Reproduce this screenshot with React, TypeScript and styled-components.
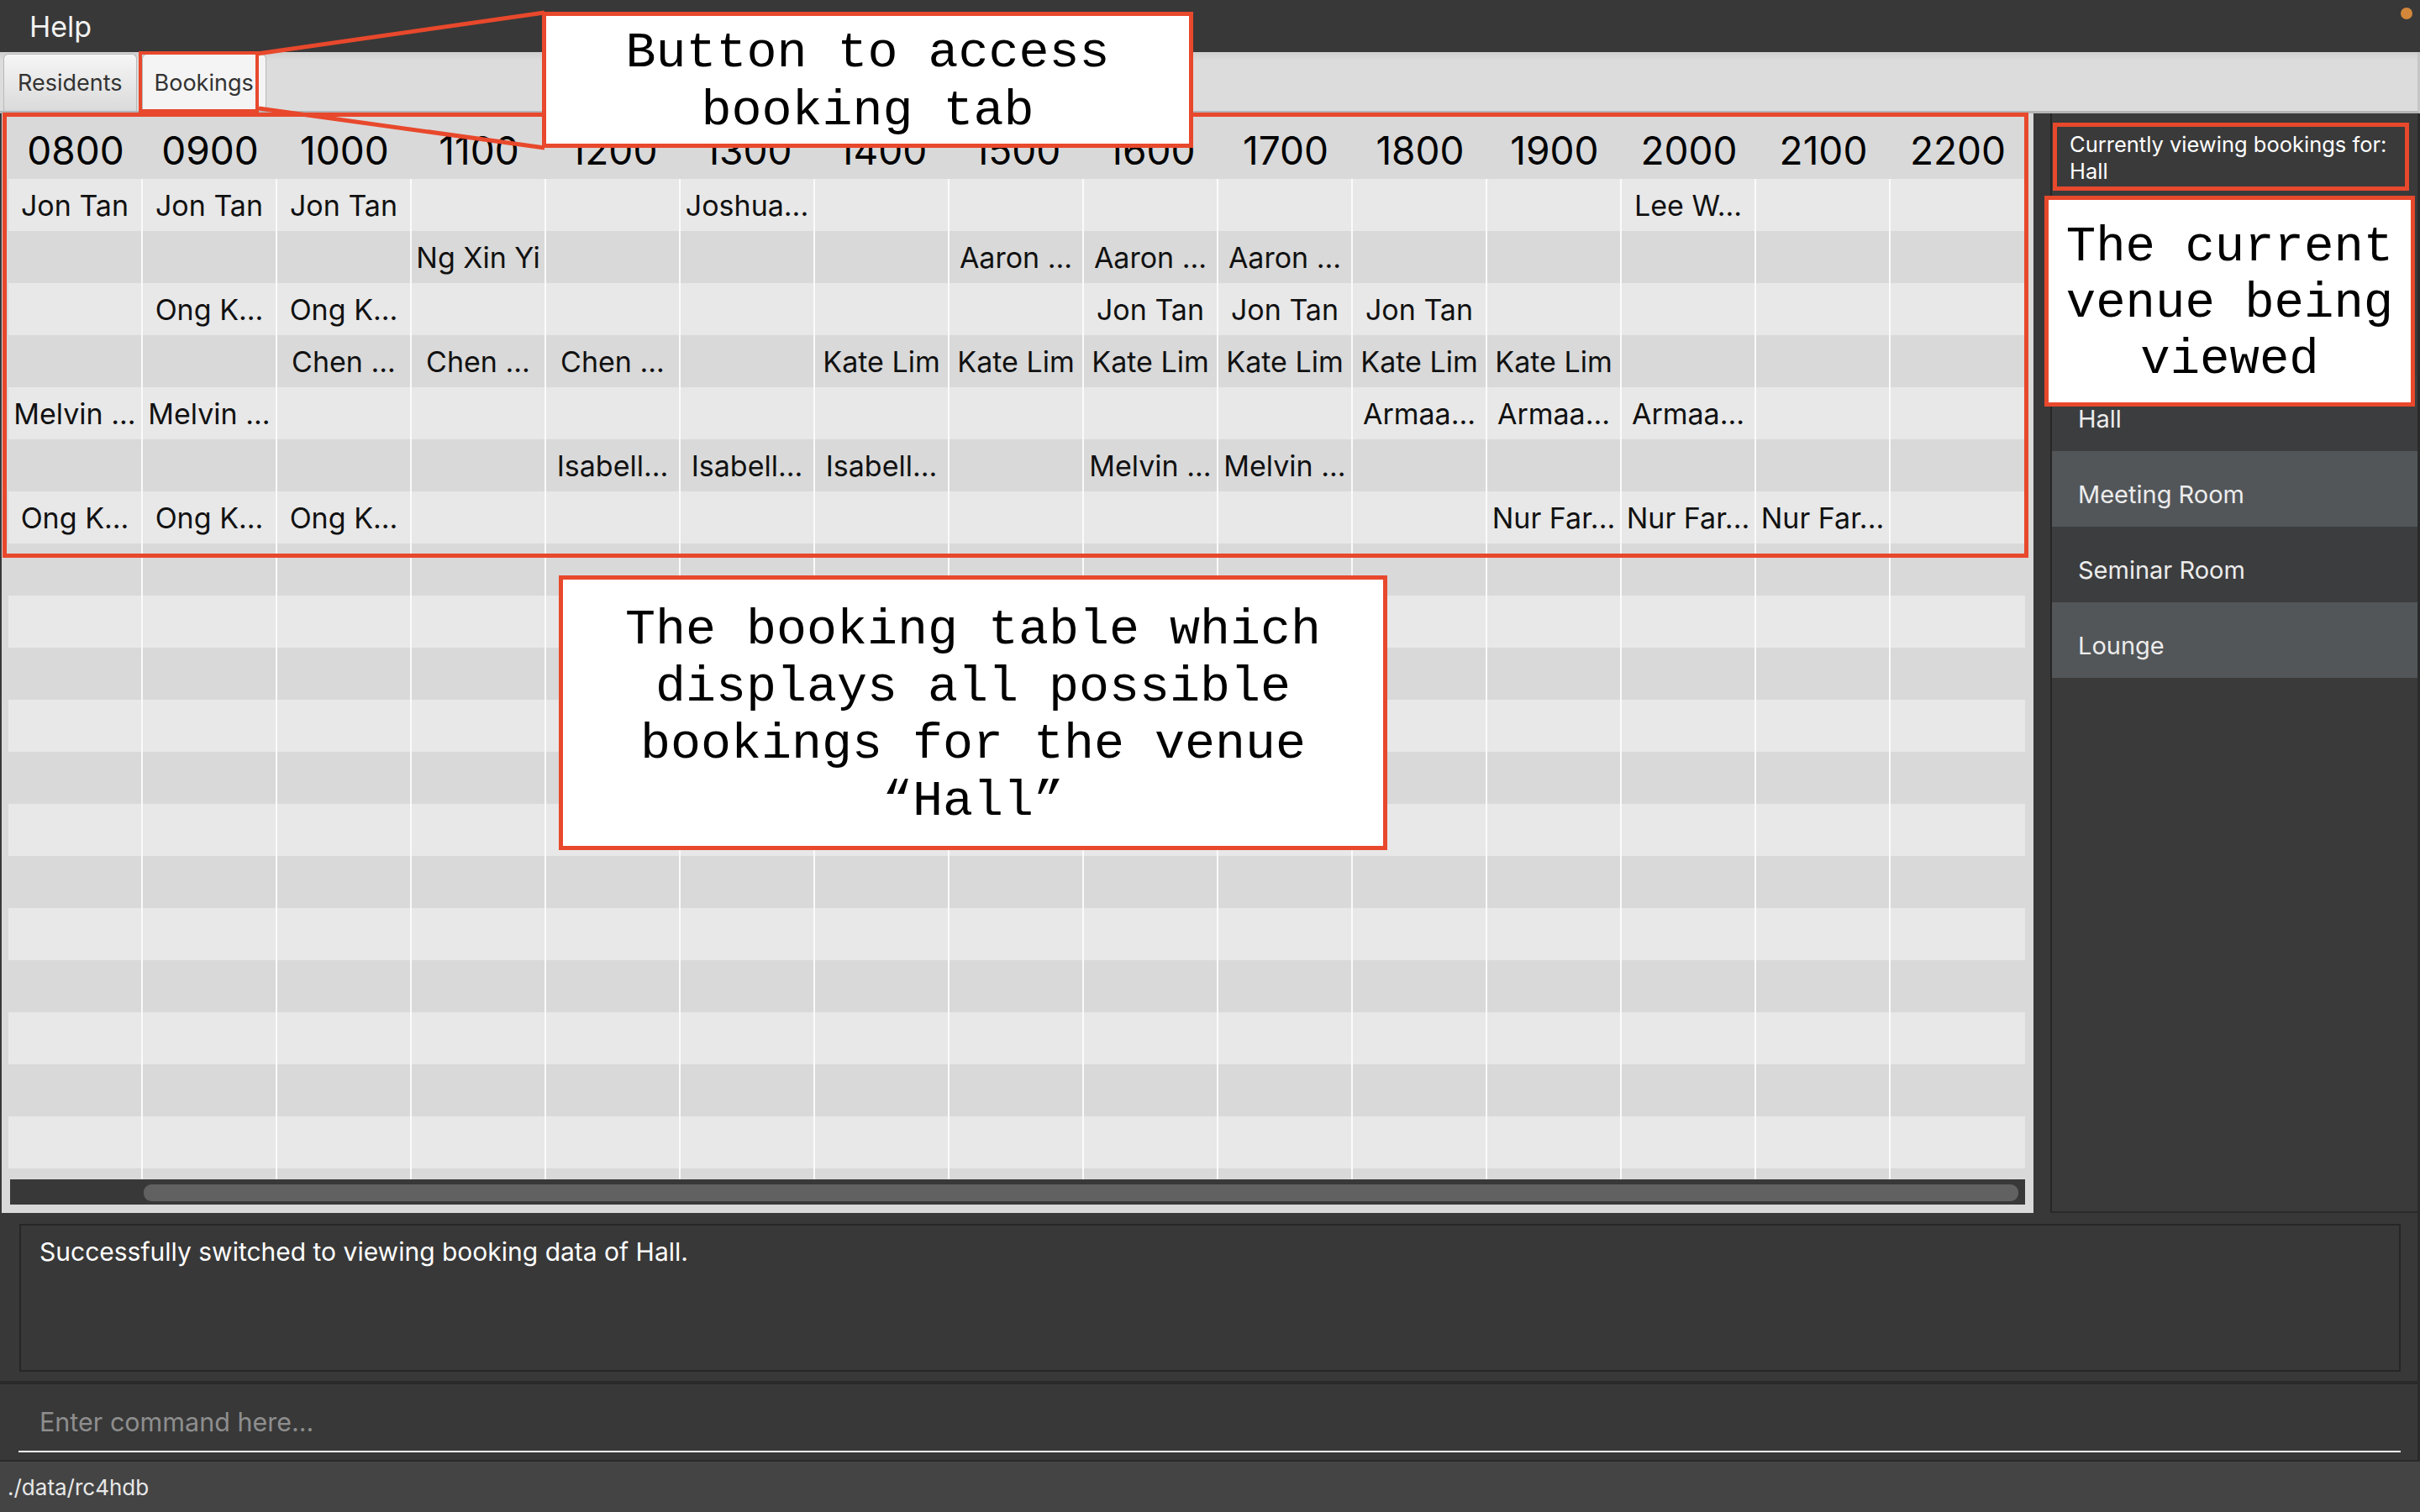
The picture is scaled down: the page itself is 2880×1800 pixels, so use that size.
import React from 'react';
import styled, { createGlobalStyle } from 'styled-components';

const RED = '#e8482c';

const GlobalStyle = createGlobalStyle`
  html, body {
    margin: 0;
    padding: 0;
    background: #383838;
  }
  body {
    font-family: Inter, "Noto Sans", sans-serif;
  }
  * {
    box-sizing: border-box;
  }
`;

const Window = styled.div`
  position: relative;
  width: 2880px;
  height: 1800px;
  display: flex;
  flex-direction: column;
  background: #383838;
  overflow: hidden;
`;

const MenuBar = styled.div`
  height: 62px;
  flex: none;
  display: flex;
  align-items: center;
  padding-left: 35px;
  color: #f2f2f2;
  font-size: 34px;
`;

const MenuDot = styled.span`
  margin-left: auto;
  align-self: flex-start;
  margin-top: 9px;
  margin-right: 9px;
  width: 14px;
  height: 14px;
  border-radius: 50%;
  background: #d3873a;
`;

const TabBar = styled.div`
  height: 73px;
  flex: none;
  display: flex;
  align-items: flex-end;
  gap: 6px;
  padding-left: 4px;
  background: linear-gradient(#cfcfcf, #dcdcdc 10px);
  border-bottom: 3px solid #b4b4b4;
  border-right: 3px solid #c6c6c6;
`;

const Tab = styled.div<{ $active?: boolean }>`
  height: 68px;
  display: flex;
  align-items: center;
  padding: 0 ${p => (p.$active ? 14 : 16)}px;
  font-size: 27px;
  color: #333;
  border: 1px solid #b8b8b8;
  border-bottom: none;
  border-radius: 6px 6px 0 0;
  background: ${p => (p.$active ? '#f4f4f4' : 'linear-gradient(#f6f6f6, #dadada)')};
`;

const Main = styled.div`
  height: 1309px;
  flex: none;
  display: flex;
`;

const TablePanel = styled.div`
  width: 2420px;
  flex: none;
  display: flex;
  flex-direction: column;
  background: #d9d9d9;
  border-left: 2px solid #383838;
  padding: 2px 10px 10px 8px;
`;

const HeaderRow = styled.div`
  display: grid;
  grid-template-columns: repeat(15, 160px);
  height: 76px;
  padding-top: 7px;
  align-items: center;
`;

const HeaderCell = styled.div`
  text-align: center;
  font-size: 46px;
  color: #000;
`;

const tones = {
  light: '#e8e8e8',
  dark: '#d9d9d9',
  none: 'transparent',
};

const Row = styled.div<{ $tone: keyof typeof tones; $height?: number }>`
  display: grid;
  grid-template-columns: repeat(15, 160px);
  height: ${p => p.$height ?? 62}px;
  background: ${p => tones[p.$tone]};
`;

const Cell = styled.div`
  display: flex;
  align-items: center;
  justify-content: center;
  font-size: 34px;
  color: #111;
  white-space: nowrap;
  overflow: hidden;

  &:not(:last-child) {
    border-right: 2px solid #fafafa;
  }
`;

const HScroll = styled.div`
  height: 30px;
  margin-left: 2px;
  padding: 6px 8px 4px 159px;
  background: #383838;
`;

const Thumb = styled.div`
  height: 100%;
  border-radius: 9px;
  background: #616161;
`;

const SidePanel = styled.div`
  flex: 1;
  display: flex;
  padding-left: 20px;
  background: #383838;
`;

const SideInner = styled.div`
  flex: 1;
  display: flex;
  flex-direction: column;
  background: #3a3a3a;
  border-left: 2px solid #262626;
  border-right: 3px solid #2a2a2a;
  border-bottom: 2px solid #2a2a2a;
`;

const ViewingLabel = styled.div`
  height: 79px;
  margin-top: 12px;
  padding: 9px 16px 0 21px;
  font-size: 25.5px;
  line-height: 32px;
  color: #fff;
  white-space: nowrap;
  overflow: hidden;
`;

const VenueList = styled.div`
  margin-top: 221px;
  display: flex;
  flex-direction: column;
`;

const VenueItem = styled.div<{ $alt: boolean }>`
  height: 90px;
  display: flex;
  align-items: center;
  padding: 12px 0 0 31px;
  font-size: 29px;
  color: #ececec;
  background: ${p => (p.$alt ? '#525659' : '#3c3d3f')};
`;

const ResultArea = styled.div`
  height: 200px;
  flex: none;
  padding: 13px 20px 11px 23px;
  background: #383838;
  border-right: 3px solid #2a2a2a;
`;

const ResultBox = styled.div`
  height: 100%;
  padding: 13px 22px;
  border: 2px solid #262626;
  font-size: 30px;
  color: #fff;
`;

const CommandArea = styled.div`
  height: 96px;
  flex: none;
  display: flex;
  align-items: flex-end;
  padding: 0 20px 9px 22px;
  background: #383838;
  border-top: 4px solid #2a2a2a;
  border-bottom: 2px solid #2a2a2a;
  border-right: 3px solid #2a2a2a;
`;

const CommandInput = styled.input`
  width: 100%;
  height: 80px;
  padding: 8px 25px 0;
  border: none;
  border-bottom: 2px solid #fff;
  background: transparent;
  color: #fff;
  font-family: Inter, "Noto Sans", sans-serif;
  font-size: 30.5px;
  outline: none;

  &::placeholder {
    color: #8e8e8e;
  }
`;

const StatusBar = styled.div`
  height: 60px;
  flex: none;
  display: flex;
  align-items: center;
  padding-left: 9px;
  background: #444;
  font-size: 26px;
  color: #e8e8e8;
`;

// annotation overlays drawn on top of the screenshot
const Highlight = styled.div<{ $x: number; $y: number; $w: number; $h: number; $bw?: number }>`
  position: absolute;
  left: ${p => p.$x}px;
  top: ${p => p.$y}px;
  width: ${p => p.$w}px;
  height: ${p => p.$h}px;
  border: ${p => p.$bw ?? 5}px solid ${RED};
  pointer-events: none;
`;

const Callout = styled.div<{ $x: number; $y: number; $w: number; $h: number; $pt: number; $fs?: number; $lh?: number }>`
  position: absolute;
  left: ${p => p.$x}px;
  top: ${p => p.$y}px;
  width: ${p => p.$w}px;
  height: ${p => p.$h}px;
  padding-top: ${p => p.$pt}px;
  background: #fff;
  border: 5px solid ${RED};
  font-family: "Liberation Mono", "Courier New", monospace;
  font-size: ${p => p.$fs ?? 60}px;
  line-height: ${p => p.$lh ?? 68}px;
  color: #000;
  text-align: center;
  white-space: nowrap;
`;

const Connectors = styled.svg`
  position: absolute;
  left: 0;
  top: 0;
  pointer-events: none;
`;

const HOURS = ['0800', '0900', '1000', '1100', '1200', '1300', '1400', '1500', '1600', '1700', '1800', '1900', '2000', '2100', '2200'];

const BOOKINGS: Record<string, string>[] = [
  { '0800': 'Jon Tan', '0900': 'Jon Tan', '1000': 'Jon Tan', '1300': 'Joshua...', '2000': 'Lee W...' },
  { '1100': 'Ng Xin Yi', '1500': 'Aaron ...', '1600': 'Aaron ...', '1700': 'Aaron ...' },
  { '0900': 'Ong K...', '1000': 'Ong K...', '1600': 'Jon Tan', '1700': 'Jon Tan', '1800': 'Jon Tan' },
  {
    '1000': 'Chen ...', '1100': 'Chen ...', '1200': 'Chen ...',
    '1400': 'Kate Lim', '1500': 'Kate Lim', '1600': 'Kate Lim', '1700': 'Kate Lim', '1800': 'Kate Lim', '1900': 'Kate Lim',
  },
  { '0800': 'Melvin ...', '0900': 'Melvin ...', '1800': 'Armaa...', '1900': 'Armaa...', '2000': 'Armaa...' },
  { '1200': 'Isabell...', '1300': 'Isabell...', '1400': 'Isabell...', '1600': 'Melvin ...', '1700': 'Melvin ...' },
  { '0800': 'Ong K...', '0900': 'Ong K...', '1000': 'Ong K...', '1900': 'Nur Far...', '2000': 'Nur Far...', '2100': 'Nur Far...' },
];

const TOTAL_ROWS = 19;

const VENUES = ['Hall', 'Meeting Room', 'Seminar Room', 'Lounge'];

const App: React.FC = () => {
  const rows = Array.from({ length: TOTAL_ROWS }, (_, i) => BOOKINGS[i] || {});

  return (
    <Window>
      <GlobalStyle />
      <MenuBar>
        Help
        <MenuDot />
      </MenuBar>

      <TabBar>
        <Tab>Residents</Tab>
        <Tab $active>Bookings</Tab>
      </TabBar>

      <Main>
        <TablePanel>
          <HeaderRow>
            {HOURS.map(h => (
              <HeaderCell key={h}>{h}</HeaderCell>
            ))}
          </HeaderRow>
          {rows.map((row, i) => (
            <Row key={i} $tone={i % 2 === 0 ? 'light' : 'dark'}>
              {HOURS.map(h => (
                <Cell key={h}>{row[h] || ''}</Cell>
              ))}
            </Row>
          ))}
          <Row $tone="none" $height={13}>
            {HOURS.map(h => (
              <Cell key={h} />
            ))}
          </Row>
          <HScroll>
            <Thumb />
          </HScroll>
        </TablePanel>

        <SidePanel>
          <SideInner>
            <ViewingLabel>
              Currently viewing bookings for:
              <br />
              Hall
            </ViewingLabel>
            <VenueList>
              {VENUES.map((v, i) => (
                <VenueItem key={v} $alt={i % 2 === 1}>{v}</VenueItem>
              ))}
            </VenueList>
          </SideInner>
        </SidePanel>
      </Main>

      <ResultArea>
        <ResultBox>Successfully switched to viewing booking data of Hall.</ResultBox>
      </ResultArea>

      <CommandArea>
        <CommandInput placeholder="Enter command here..." readOnly />
      </CommandArea>

      <StatusBar>./data/rc4hdb</StatusBar>

      {/* annotations: highlights first, callouts above them */}
      <Highlight $x={3} $y={134} $w={2411} $h={530} />
      <Highlight $x={2443} $y={146} $w={424} $h={81} />
      <Highlight $x={165} $y={61} $w={143} $h={73} $bw={4} />
      <Connectors width={700} height={200}>
        <line x1={306} y1={64} x2={648} y2={15} stroke={RED} strokeWidth={5} />
        <line x1={308} y1={129} x2={648} y2={176} stroke={RED} strokeWidth={5} />
      </Connectors>

      <Callout $x={645} $y={14} $w={775} $h={162} $pt={10} $lh={69}>
        Button to access
        <br />
        booking tab
      </Callout>

      <Callout $x={665} $y={685} $w={986} $h={327} $pt={26}>
        The booking table which
        <br />
        displays all possible
        <br />
        bookings for the venue
        <br />
        “Hall”
      </Callout>

      <Callout $x={2433} $y={233} $w={441} $h={251} $pt={23} $fs={59} $lh={67}>
        The current
        <br />
        venue being
        <br />
        viewed
      </Callout>
    </Window>
  );
};

export default App;
